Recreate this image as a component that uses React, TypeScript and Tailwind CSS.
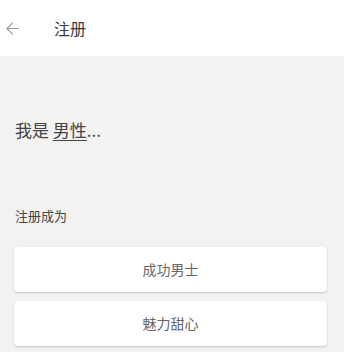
import { ArrowLeft } from "lucide-react";

const font = { fontFamily: '"Noto Sans CJK SC", "Noto Sans", sans-serif' };

function OptionButton({ label }: { label: string }) {
  return (
    <button className="flex h-[45px] w-full items-center justify-center rounded-[4px] bg-white text-[14px] text-[#666] shadow-[0_1px_2px_rgba(0,0,0,0.18)]">
      {label}
    </button>
  );
}

export default function App() {
  return (
    <div style={font} className="flex min-h-[352px] w-[344px] flex-col bg-[#f3f2f1]">
      {/* header */}
      <div className="flex h-[56px] items-center bg-white">
        <ArrowLeft className="ml-[3px] h-[19px] w-[19px] text-[#9a9a9a]" strokeWidth={1.4} />
        <h1 className="ml-[32px] text-[16px] text-[#3a3a3a]">注册</h1>
      </div>

      <div className="px-[14px]">
        <div className="mt-[62px] pl-px text-[17px] leading-[24px] text-[#444]">
          我是 <span className="underline underline-offset-[3px]">男性</span>...
        </div>

        <div className="mt-[65px] pl-px text-[13px] leading-[18px] text-[#444]">注册成为</div>

        <div className="mt-[22px] flex flex-col gap-[9px] pr-[3px]">
          <OptionButton label="成功男士" />
          <OptionButton label="魅力甜心" />
        </div>
      </div>
    </div>
  );
}
